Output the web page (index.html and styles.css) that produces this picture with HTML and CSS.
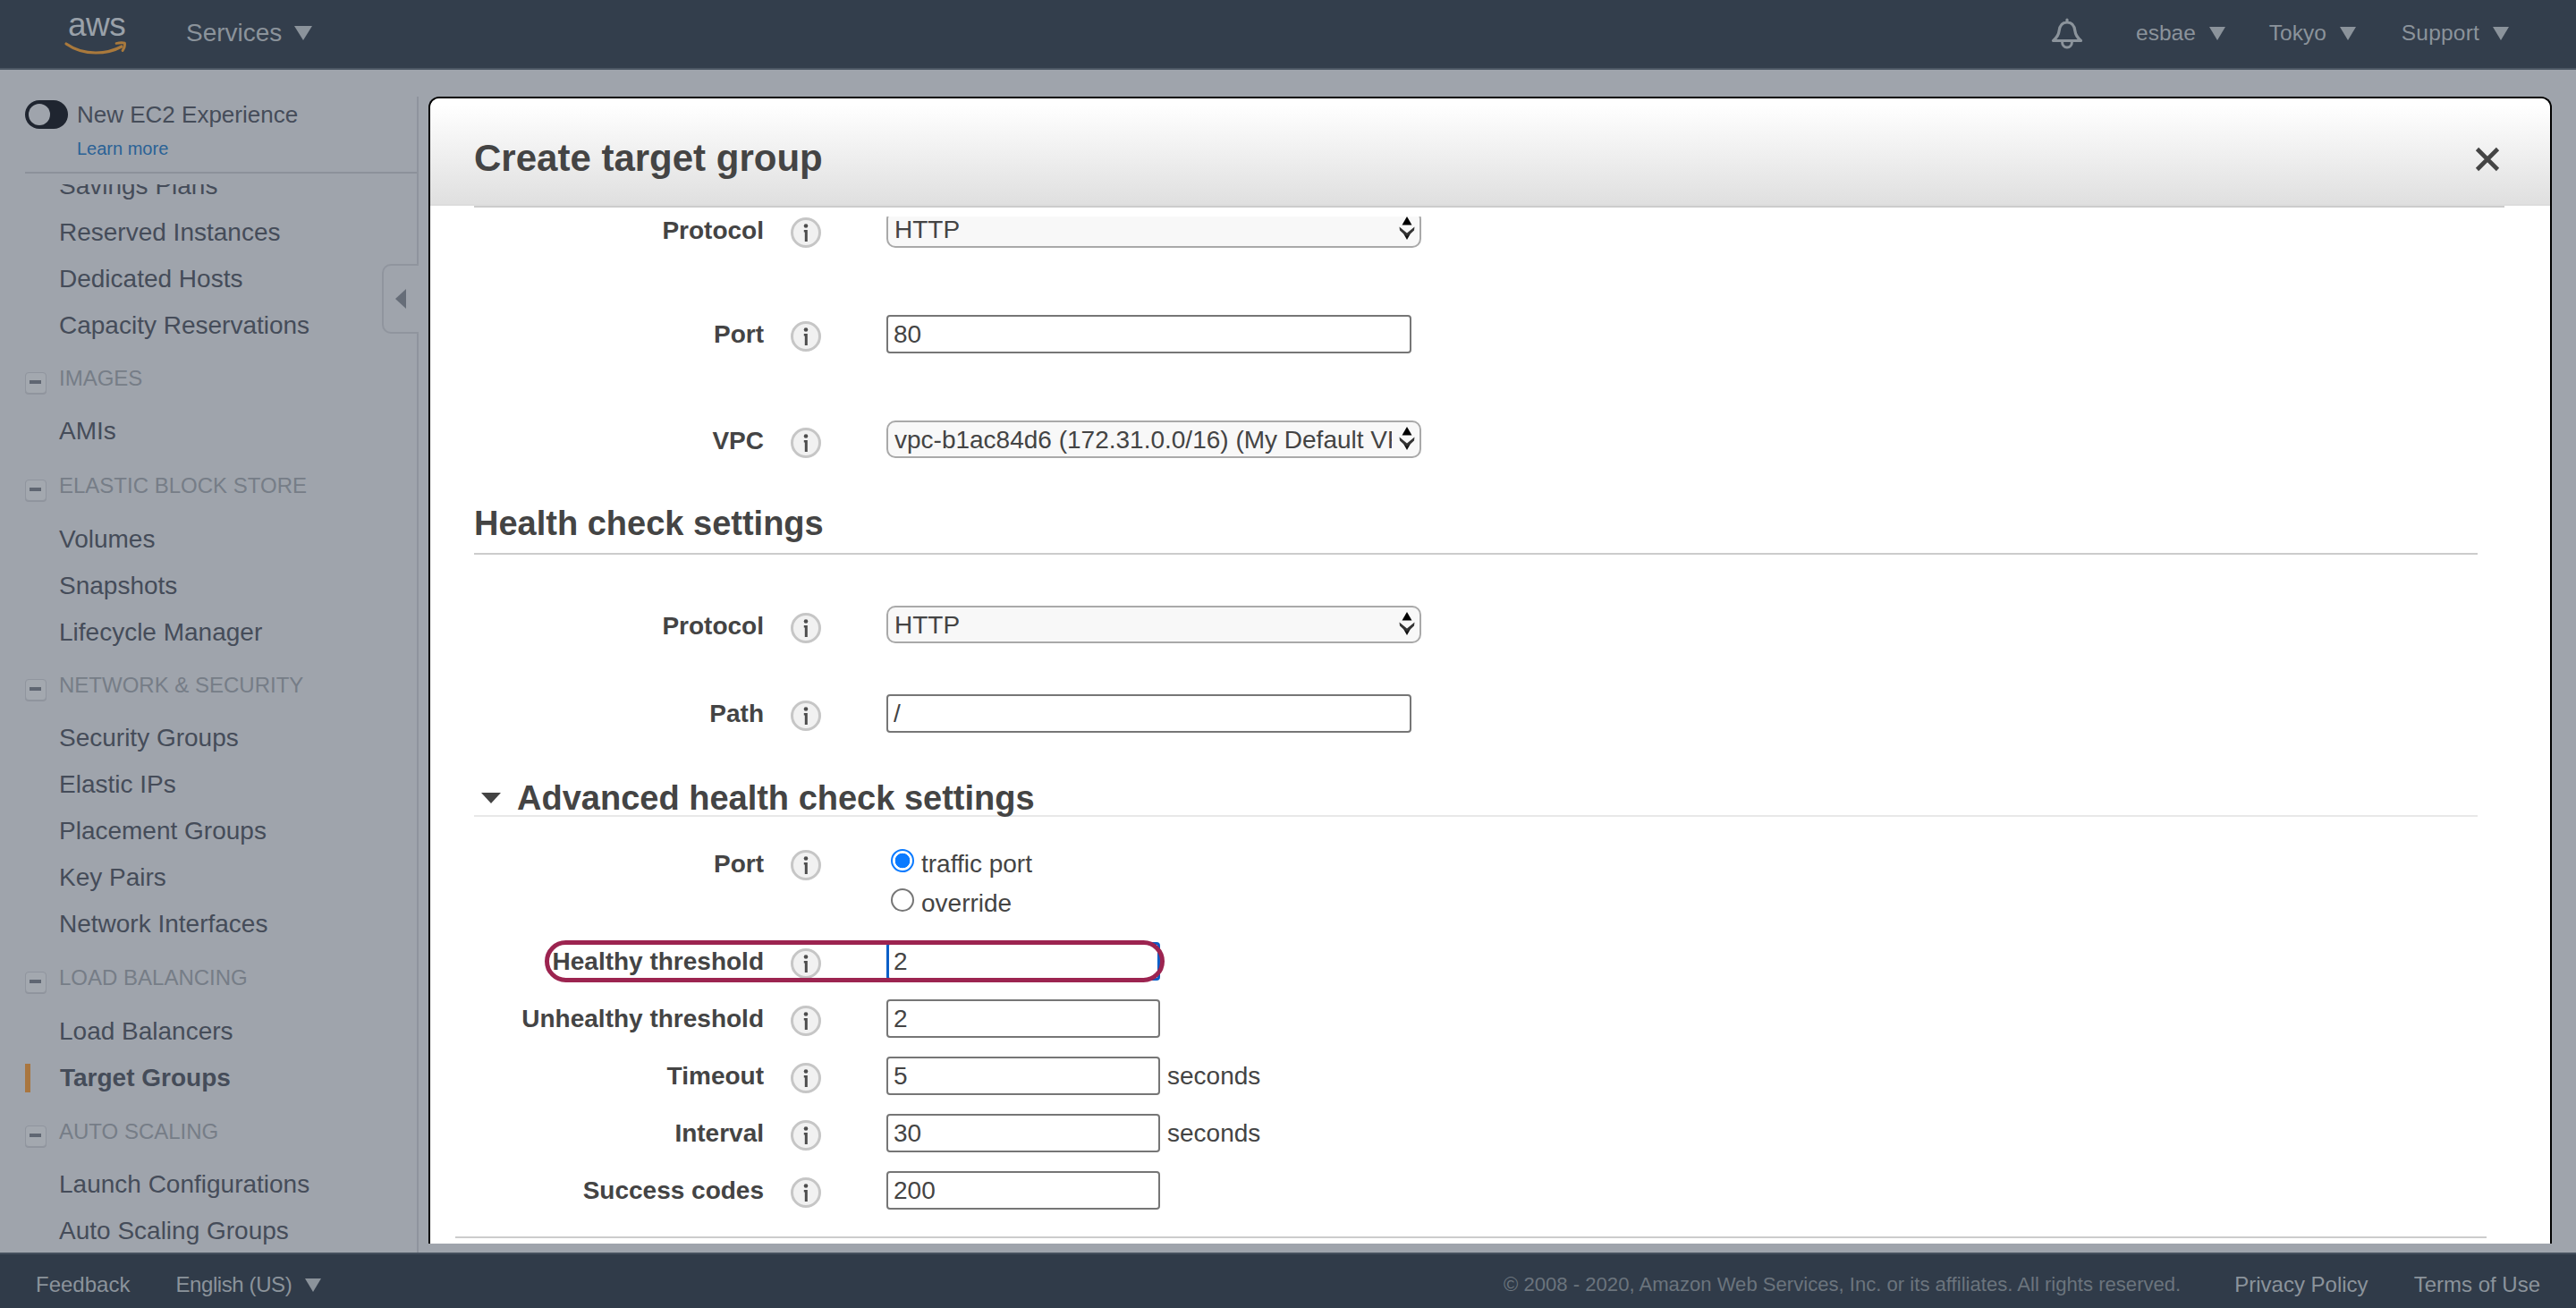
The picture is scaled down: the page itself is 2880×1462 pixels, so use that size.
FILE: index.html
```html
<!DOCTYPE html>
<html lang="en">
<head>
<meta charset="utf-8">
<title>Create target group</title>
<link rel="stylesheet" href="styles.css">
</head>
<body>
<svg class="defs" width="0" height="0" aria-hidden="true">
  <symbol id="info" viewBox="0 0 34 34">
    <circle cx="17" cy="17" r="15.500" fill="#f1f1f1" stroke="#c6c6c6" stroke-width="3"/>
    <circle cx="17" cy="9.500" r="2.300" fill="#4d4d4d"/>
    <path d="M14.800 14h4v13h-3v-10.500h-1z" fill="#4d4d4d"/>
  </symbol>
  <symbol id="updown" viewBox="0 0 20 28">
    <path d="M10 1l5.500 9.500h-11z" fill="#000"/>
    <path d="M1.500 12.500l8.500 7 8.500-7-.5 4-8 7.500-8-7.500z" fill="#333"/>
    <path d="M6 20l4 7 4-7-4 3z" fill="#111"/>
  </symbol>
</svg>

<header class="topbar">
  <div class="logo">
    <span class="logo-text">aws</span>
    <svg class="logo-smile" width="70" height="16" viewBox="0 0 70 16"><path d="M1 3c10 7 22 10 33 10 10 0 20-2 29-7" fill="none" stroke="#a9793c" stroke-width="3.200" stroke-linecap="round"/><path d="M57 2.500c3-.7 7-.9 9.500-.4.400 2.500-.8 6-2.500 8.500" fill="none" stroke="#a9793c" stroke-width="2.800" stroke-linecap="round" stroke-linejoin="round"/></svg>
  </div>
  <span class="top-item services">Services</span><i class="caret caret-lg"></i>
  <svg class="bell" width="36" height="35" viewBox="0 0 36 35"><path d="M18 2v3M18 5c-6 0-8.500 4.500-9 10-.4 4-2.500 7-6.500 10.500h31c-4-3.500-6.100-6.500-6.500-10.500-.5-5.500-3-10-9-10z" fill="none" stroke="#8b939b" stroke-width="3.200" stroke-linejoin="round" stroke-linecap="round"/><path d="M12.500 26.500c0 4 2.500 6.500 5.500 6.500s5.500-2.500 5.500-6.500" fill="none" stroke="#8b939b" stroke-width="3"/></svg>
  <span class="top-item small first">esbae</span><i class="caret"></i>
  <span class="top-item small tokyo">Tokyo</span><i class="caret"></i>
  <span class="top-item small support">Support</span><i class="caret"></i>
</header>

<main class="main">
  <aside class="sidebar">
    <div class="side-inner">
      <div class="experience">
        <div class="exp-row">
          <span class="toggle"><span class="knob"></span></span>
          <span class="exp-label">New EC2 Experience</span>
        </div>
        <a class="learn">Learn more</a>
      </div>
      <nav class="nav">
        <div class="nav-list">
          <a class="nav-item">Savings Plans</a>
          <a class="nav-item">Reserved Instances</a>
          <a class="nav-item">Dedicated Hosts</a>
          <a class="nav-item">Capacity Reservations</a>
          <div class="nav-head"><span class="minus"></span>IMAGES</div>
          <a class="nav-item">AMIs</a>
          <div class="nav-head nav-head-ebs"><span class="minus"></span>ELASTIC BLOCK STORE</div>
          <a class="nav-item">Volumes</a>
          <a class="nav-item">Snapshots</a>
          <a class="nav-item">Lifecycle Manager</a>
          <div class="nav-head"><span class="minus"></span>NETWORK &amp; SECURITY</div>
          <a class="nav-item">Security Groups</a>
          <a class="nav-item">Elastic IPs</a>
          <a class="nav-item">Placement Groups</a>
          <a class="nav-item">Key Pairs</a>
          <a class="nav-item">Network Interfaces</a>
          <div class="nav-head nav-head-lb"><span class="minus"></span>LOAD BALANCING</div>
          <a class="nav-item">Load Balancers</a>
          <a class="nav-item active">Target Groups</a>
          <div class="nav-head nav-head-as"><span class="minus"></span>AUTO SCALING</div>
          <a class="nav-item">Launch Configurations</a>
          <a class="nav-item">Auto Scaling Groups</a>
        </div>
      </nav>
      <div class="collapse"><i class="collapse-arrow"></i></div>
    </div>
  </aside>

  <section class="modal">
    <div class="modal-head">
      <h1 class="modal-title">Create target group</h1>
      <svg class="close" width="28" height="28" viewBox="0 0 28 28"><path d="M2.500 2.500l23 23M25.500 2.500l-23 23" stroke="#444" stroke-width="4.600" fill="none"/></svg>
    </div>
    <div class="modal-body">
      <form class="form">
        <div class="row row-first">
          <label class="label">Protocol</label>
          <svg class="info"><use href="#info"/></svg>
          <div class="select-wrap"><select class="select"><option>HTTP</option></select><svg class="updown"><use href="#updown"/></svg></div>
        </div>
        <div class="row row-port">
          <label class="label">Port</label>
          <svg class="info"><use href="#info"/></svg>
          <input class="input input-long" value="80">
        </div>
        <div class="row row-vpc">
          <label class="label">VPC</label>
          <svg class="info"><use href="#info"/></svg>
          <div class="select-wrap"><select class="select"><option>vpc-b1ac84d6 (172.31.0.0/16) (My Default VPC)</option></select><svg class="updown"><use href="#updown"/></svg></div>
        </div>

        <h2 class="section section-health">Health check settings</h2>

        <div class="row row-hprotocol">
          <label class="label">Protocol</label>
          <svg class="info"><use href="#info"/></svg>
          <div class="select-wrap"><select class="select"><option>HTTP</option></select><svg class="updown"><use href="#updown"/></svg></div>
        </div>
        <div class="row row-path">
          <label class="label">Path</label>
          <svg class="info"><use href="#info"/></svg>
          <input class="input input-long" value="/">
        </div>

        <h2 class="section section-adv"><i class="adv-caret"></i>Advanced health check settings</h2>

        <div class="row row-radio">
          <label class="label">Port</label>
          <svg class="info"><use href="#info"/></svg>
          <div class="radios">
            <label class="radio-line"><input class="radio" type="radio" name="port" checked>traffic port</label>
            <label class="radio-line"><input class="radio" type="radio" name="port">override</label>
          </div>
        </div>
        <div class="row row-tight row-healthy">
          <label class="label">Healthy threshold</label>
          <svg class="info"><use href="#info"/></svg>
          <input class="input input-short input-focus" value="2">
          <span class="highlight"></span>
        </div>
        <div class="row row-tight">
          <label class="label">Unhealthy threshold</label>
          <svg class="info"><use href="#info"/></svg>
          <input class="input input-short" value="2">
        </div>
        <div class="row row-tight">
          <label class="label">Timeout</label>
          <svg class="info"><use href="#info"/></svg>
          <div class="with-unit"><input class="input input-short" value="5"><span class="unit">seconds</span></div>
        </div>
        <div class="row row-tight">
          <label class="label">Interval</label>
          <svg class="info"><use href="#info"/></svg>
          <div class="with-unit"><input class="input input-short" value="30"><span class="unit">seconds</span></div>
        </div>
        <div class="row row-tight">
          <label class="label">Success codes</label>
          <svg class="info"><use href="#info"/></svg>
          <input class="input input-short" value="200">
        </div>
        <hr class="form-end">
      </form>
    </div>
  </section>
</main>

<footer class="footer">
  <span class="foot-item">Feedback</span>
  <span class="foot-item lang">English (US)</span><i class="caret"></i>
  <span class="copyright">© 2008 - 2020, Amazon Web Services, Inc. or its affiliates. All rights reserved.</span>
  <span class="foot-item privacy">Privacy Policy</span>
  <span class="foot-item terms">Terms of Use</span>
</footer>
</body>
</html>
```

FILE: styles.css
```css
* { box-sizing: border-box; }
html, body { margin: 0; height: 100%; }
body {
  width: 2880px;
  height: 1462px;
  overflow: hidden;
  display: flex;
  flex-direction: column;
  background: #9fa4ac;
  font-family: "Liberation Sans", Arial, sans-serif;
  color: #454c59;
}
.defs { position: absolute; }

/* top bar */
.topbar {
  height: 78px;
  flex: none;
  display: flex;
  align-items: center;
  padding: 0 75px 2px 73px;
  background: #333e4c;
  border-bottom: 2px solid #4c5764;
  color: #8b939b;
}
.logo { width: 67px; height: 60px; margin-right: 68px; display: flex; flex-direction: column; }
.logo-text {
  height: 34px;
  font-size: 37px;
  line-height: 34px;
  letter-spacing: -0.5px;
  color: #9aa1a9;
  padding-left: 3px;
  margin-top: 4px;
}
.logo-smile { margin-top: 1px; overflow: visible; }
.top-item { font-size: 28px; }
.top-item.small { font-size: 24.5px; margin-left: 51px; }
.top-item.small.first { margin-left: 59px; }
.top-item.small.tokyo { margin-left: 49px; }
.top-item.small.support { letter-spacing: 0.2px; }
.caret {
  width: 0;
  height: 0;
  margin-left: 15px;
  border-left: 9px solid transparent;
  border-right: 9px solid transparent;
  border-top: 15px solid #8b939b;
}
.caret-lg { margin-left: 14px; border-left-width: 10px; border-right-width: 10px; border-top-width: 16px; }
.bell { margin-left: auto; }

/* main */
.main { flex: 1; min-height: 0; display: flex; }
.sidebar { width: 468px; flex: none; padding-top: 30px; }
.side-inner {
  position: relative;
  height: 100%;
  display: flex;
  flex-direction: column;
  border-right: 2px solid #8f949d;
}
.experience {
  height: 86px;
  flex: none;
  margin-left: 28px;
  padding-top: 4px;
  border-bottom: 2px solid #8c919a;
}
.exp-row { display: flex; align-items: center; gap: 10px; height: 32px; }
.toggle {
  width: 48px;
  height: 32px;
  border-radius: 16px;
  background: #1f2530;
  padding: 4px;
}
.knob { display: block; width: 24px; height: 24px; border-radius: 50%; background: #9fa4ac; }
.exp-label { font-size: 26px; color: #454c59; padding-top: 1px; }
.learn { display: block; margin: 10px 0 0 58px; font-size: 20px; line-height: 24px; color: #2a6296; }

.nav { flex: 1; min-height: 0; overflow: hidden; margin-top: 12px; }
.nav-list { margin-top: -24px; }
.nav-item {
  position: relative;
  display: block;
  height: 52px;
  padding-left: 66px;
  font-size: 28px;
  line-height: 52px;
  color: #454c59;
}
.nav-item.active { font-weight: bold; padding-left: 67px; }
.nav-item.active::before {
  content: "";
  position: absolute;
  left: 28px;
  top: 10px;
  width: 6px;
  height: 32px;
  background: #a9763f;
}
.nav-head {
  height: 66px;
  display: flex;
  align-items: center;
  padding-left: 28px;
  font-size: 24px;
  color: #767d87;
}
.nav-head-ebs { height: 69px; }
.nav-head-lb { height: 68px; }
.nav-head-as { height: 67px; }
.minus {
  position: relative;
  width: 24px;
  height: 24px;
  margin: 10px 14px 0 0;
  border: 1.500px solid #90959e;
  border-radius: 4px;
  background: #a3a8af;
  box-shadow: 0 1px 0 #8f949d;
}
.minus::after {
  content: "";
  position: absolute;
  left: 4px;
  top: 8px;
  width: 13px;
  height: 4px;
  background: #5f6672;
}
.collapse {
  position: absolute;
  left: 427px;
  top: 187px;
  width: 41px;
  height: 78px;
  background: #9fa4ac;
  border: 2px solid #90959e;
  border-right: 0;
  border-radius: 10px 0 0 10px;
  display: flex;
  align-items: center;
  padding-left: 13px;
}
.collapse-arrow {
  width: 0;
  height: 0;
  border-top: 11px solid transparent;
  border-bottom: 11px solid transparent;
  border-right: 12px solid #666d78;
}

/* modal */
.modal {
  width: 2374px;
  flex: none;
  margin: 30px 0 10px 11px;
  display: flex;
  flex-direction: column;
  background: #fff;
  border: 2px solid #000;
  border-bottom: 0;
  border-radius: 12px 12px 0 0;
  overflow: hidden;
}
.modal-head {
  height: 122px;
  flex: none;
  display: flex;
  align-items: center;
  justify-content: space-between;
  padding: 14px 56px 0 49px;
  background:
    linear-gradient(#dedede, #dedede) 49px 118px / 2270px 2px no-repeat,
    linear-gradient(#cccccc, #cccccc) 49px 120px / 2270px 2px no-repeat,
    linear-gradient(#dcdcdc, #dcdcdc) 0 118px / 100% 2px no-repeat,
    linear-gradient(#ffffff 6%, #dfdfdf) 0 0 / 100% 120px no-repeat;
}
.modal-title { margin: 0 0 3px; font-size: 42px; font-weight: bold; color: #444; line-height: 50px; }
.modal-body { flex: 1; min-height: 0; padding: 10px 81px 0 49px; color: #444; }
.form { height: 100%; overflow: hidden; margin: 0 -81px 0 -49px; padding: 0 81px 0 49px; }

.row {
  position: relative;
  display: grid;
  grid-template-columns: 324px 137px auto;
  justify-content: start;
  align-items: center;
  font-size: 28px;
}
.label { font-weight: bold; font-size: 28px; line-height: 34px; color: #444; text-align: right; }
.info { width: 34px; height: 34px; margin: 5px 0 0 30px; }
.row-first { margin-top: -7px; }
.row-port { margin-top: 72px; }
.row-vpc { margin-top: 75px; }
.row-hprotocol { margin-top: 57px; }
.row-path { margin-top: 54px; }
.row-tight { margin-top: 21px; }
.row-healthy { margin-top: 16px; }
.row-radio { margin-top: 36px; align-items: start; }
.row-radio .info { margin-top: 1px; }

.select-wrap { position: relative; width: 598px; height: 42px; margin-bottom: 3px; }
.select {
  appearance: none;
  display: block;
  width: 100%;
  height: 100%;
  padding: 0 31px 0 7px;
  font: 28px "Liberation Sans", Arial, sans-serif;
  color: #444;
  background: #f8f8f8;
  border: 2px solid #a9a9a9;
  border-radius: 10px;
}
.updown { position: absolute; right: 6px; top: 6px; width: 20px; height: 28px; }
.input {
  display: block;
  height: 43px;
  padding: 0 6px;
  font: 28px "Liberation Sans", Arial, sans-serif;
  color: #444;
  background: #fff;
  border: 2px solid #767676;
  border-radius: 4px;
  outline: 0;
}
.input-long { width: 587px; }
.input-short { width: 306px; }
.input-focus { border: 3px solid #0a5fc8; padding-left: 5px; }
.highlight {
  position: absolute;
  left: 79px;
  top: -2px;
  width: 693px;
  height: 47px;
  border: 5px solid #9c2450;
  border-radius: 24px;
}
.with-unit { display: flex; align-items: center; gap: 8px; }
.unit { font-size: 28px; color: #444; }

.section { margin: 0; font-size: 38px; font-weight: bold; color: #444; box-sizing: border-box; }
.section-health {
  margin-top: 47px;
  height: 58px;
  line-height: 46px;
  border-bottom: 2px solid #ccc;
}
.section-adv {
  margin-top: 54px;
  height: 40px;
  line-height: 40px;
  display: flex;
  align-items: center;
  border-bottom: 2px solid #e8e8e8;
}
.adv-caret {
  width: 0;
  height: 0;
  margin: 0 18px 0 8px;
  border-left: 11px solid transparent;
  border-right: 11px solid transparent;
  border-top: 12px solid #444;
}
.radios { display: flex; flex-direction: column; padding-left: 5px; }
.radio-line { display: flex; align-items: flex-start; gap: 8px; height: 44px; line-height: 34px; font-size: 28px; color: #444; }
.radio {
  appearance: none;
  width: 26px;
  height: 26px;
  margin: 0;
  flex: none;
  border: 2px solid #767676;
  border-radius: 50%;
  background: #fff;
}
.radio:checked { border-color: #0a7aff; background: radial-gradient(circle, #0a7aff 0 8px, #fff 8.600px); }
.form-end { margin: 30px -10px 0 -21px; height: 2px; border: 0; background: #ccc; }

/* footer */
.footer {
  height: 62px;
  flex: none;
  display: flex;
  align-items: center;
  padding: 8px 40px 0;
  background: #303b49;
  border-top: 2px solid #444f5d;
  color: #8b939b;
}
.foot-item { font-size: 24px; }
.lang { margin-left: 51px; letter-spacing: -0.4px; }
.copyright { margin-left: auto; font-size: 22.1px; color: #6b747d; }
.privacy { margin-left: 60px; }
.terms { margin-left: 51px; }
```
